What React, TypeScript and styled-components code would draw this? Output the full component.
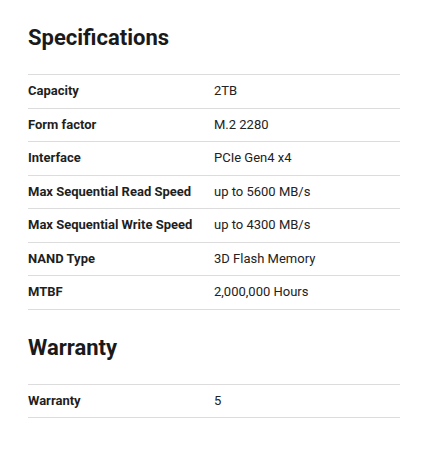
import React from 'react';
import styled, { createGlobalStyle } from 'styled-components';

const GlobalStyle = createGlobalStyle`
  body {
    margin: 0;
    background: #fff;
    font-family: Roboto, "Liberation Sans", Arial, sans-serif;
    color: #1d1d1f;
  }
`;

const Page = styled.div`
  width: 372px;
  padding: 0 41px 0 28px;
`;

const Section = styled.section<{ $gap?: string }>`
  margin-top: ${props => props.$gap || '24px'};
`;

const Title = styled.h2`
  margin: 0 0 22px;
  font-size: 22px;
  line-height: 28px;
  font-weight: 700;
  color: #1a1a1a;
`;

const SpecTable = styled.div`
  border-bottom: 1px solid #dcdcdc;
`;

const Row = styled.div`
  display: grid;
  grid-template-columns: 1fr 1fr;
  border-top: 1px solid #dcdcdc;
  padding: 7px 0;
  font-size: 13px;
  line-height: 18.5px;
`;

const Label = styled.div`
  font-weight: 700;
  color: #1f1f1f;
`;

const Value = styled.div`
  font-weight: 400;
  color: #222;
`;

const specs: [string, string][] = [
  ['Capacity', '2TB'],
  ['Form factor', 'M.2 2280'],
  ['Interface', 'PCIe Gen4 x4'],
  ['Max Sequential Read Speed', 'up to 5600 MB/s'],
  ['Max Sequential Write Speed', 'up to 4300 MB/s'],
  ['NAND Type', '3D Flash Memory'],
  ['MTBF', '2,000,000 Hours'],
];

const warranty: [string, string][] = [['Warranty', '5']];

const SpecBlock = ({ title, rows, gap }: { title: string; rows: [string, string][]; gap?: string }) => (
  <Section $gap={gap}>
    <Title>{title}</Title>
    <SpecTable>
      {rows.map(([k, v]) => (
        <Row key={k}>
          <Label>{k}</Label>
          <Value>{v}</Value>
        </Row>
      ))}
    </SpecTable>
  </Section>
);

export default function App() {
  return (
    <>
      <GlobalStyle />
      <Page>
        <SpecBlock title="Specifications" rows={specs} />
        <SpecBlock title="Warranty" rows={warranty} gap="24px" />
      </Page>
    </>
  );
}
